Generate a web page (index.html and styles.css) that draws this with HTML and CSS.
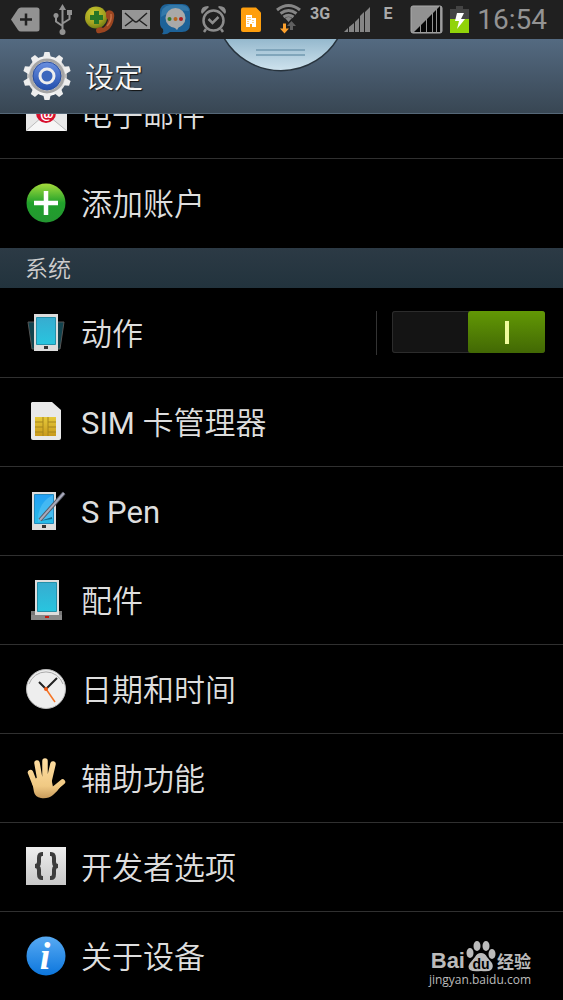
FILE: index.html
```html
<!DOCTYPE html>
<html lang="zh-CN">
<head>
    <meta charset="UTF-8">
    <meta name="viewport" content="width=device-width, initial-scale=1.0">
    <title>设定</title>
    <link rel="stylesheet" href="styles.css">
</head>

<body>
    <!-- 状态栏 -->
    <div class="status-bar">
        <svg class="status-icon" viewBox="6 0 38 39">
            <path d="M11 19.5L18 9q1-1.500 3-1.500H37q2.500 0 2.500 2.500V29q0 2.500-2.500 2.500H21q-2 0-3-1.500z" fill="#929292"/>
            <path d="M26 13.500v12M20 19.500h12" stroke="#222" stroke-width="2.500"/>
        </svg>
        <svg class="status-icon" viewBox="44 0 38 39">
            <path d="M62.500 7v25M62.500 26l-6.500-4.500V15M62.500 23.500l7-4.500v-6" fill="none" stroke="#929292" stroke-width="2"/>
            <path d="M62.500 4l3.500 6h-7z" fill="#929292"/>
            <circle cx="62.500" cy="32" r="3" fill="#929292"/>
            <circle cx="56" cy="15.500" r="2.500" fill="#929292"/>
            <path d="M67 10h5v5h-5z" fill="#929292"/>
        </svg>
        <svg class="status-icon" viewBox="82 0 38 39">
            <defs>
                <radialGradient id="ball" cx=".4" cy=".3" r=".8">
                    <stop offset="0" stop-color="#c9cb30"/>
                    <stop offset=".6" stop-color="#a3a020"/>
                    <stop offset="1" stop-color="#5d7210"/>
                </radialGradient>
            </defs>
            <circle cx="96" cy="17.500" r="11" fill="url(#ball)"/>
            <path d="M94 11h5v4h4v5h-4v4h-5v-4h-4v-5h4z" fill="#267526"/>
            <path d="M106 12q2-3 6-1 3 2 2 7-1 8-6 12-5 4-11 3-2-3 0-5l4-1 2 1q4-3 5-8l-2-3z" fill="#9b4520"/>
            <path d="M111 14q1 7-4 12" fill="none" stroke="#c67045" stroke-width="1.500"/>
        </svg>
        <svg class="status-icon" viewBox="120 0 38 39">
            <path d="M122 10h28v19h-28z" fill="#969696"/>
            <path d="M125 13l9 8q2 2 4 0l9-8M125 26l8-6M147 26l-8-6" fill="none" stroke="#222" stroke-width="1.500"/>
        </svg>
        <svg class="status-icon" viewBox="158 0 38 39">
            <path d="M168 4h14q8 0 8 8v12q0 8-8 8h-12q-3 3-8 2 2-2 1-5-3-2-3-6V12q0-8 8-8z" fill="#1d6298"/>
            <path d="M161 17q0-11 9-12h12q7 1 7 6-15-2-28 6z" fill="#3479aa"/>
            <circle cx="175.500" cy="18" r="10" fill="#a9a9a9"/>
            <path d="M172 25l5 5 3-5z" fill="#a9a9a9"/>
            <circle cx="169.500" cy="19" r="2" fill="#357b2c"/>
            <circle cx="175.500" cy="19" r="2" fill="#b5651f"/>
            <circle cx="181" cy="19" r="2" fill="#ae1d1d"/>
        </svg>
        <svg class="status-icon" viewBox="196 0 38 39">
            <circle cx="213.500" cy="20.500" r="10" fill="none" stroke="#8c8c8c" stroke-width="2.500"/>
            <path d="M208.500 19l4 4 6-6M206 29l-2 3M221 29l2 3" fill="none" stroke="#8c8c8c" stroke-width="2.500"/>
            <path d="M201 12q0-6 7-6l1 1-7 7zM226 12q0-6-7-6l-1 1 7 7z" fill="#8c8c8c"/>
        </svg>
        <svg class="status-icon" viewBox="234 0 38 39">
            <path d="M243 7.500h13l5 5V30q0 2-2 2h-16q-2 0-2-2V9.500q0-2 2-2z" fill="#fe9e0d"/>
            <path d="M246 15h6v3h4v9h-10z" fill="#fff"/>
            <path d="M248 17v7M250 17v4M253 20v4" stroke="#fe9e0d" stroke-dasharray="1 1"/>
            <path d="M250 24h2v3h-2z" fill="#fe9e0d"/>
        </svg>
        <svg class="status-icon" viewBox="272 0 38 39">
            <path d="M277 10q11.500-9 23 0M280.500 13.500q8-6 16 0M283.500 17q5-3.500 10 0" fill="none" stroke="#858585" stroke-width="3"/>
            <path d="M285 18q3.500-2 7 0l-3.500 4z" fill="#858585"/>
            <path d="M283 23.500h3v5h3l-4.500 5-4.500-5h3z" fill="#fda12d"/>
            <path d="M290 30h3v-4h3l-4.500-5-4.500 5h3z" fill="#606060"/>
        </svg>
        <span class="network">3G</span>
        <svg class="status-icon small" viewBox="342 0 32 39">
            <path d="M344 32l4-4v4zM349 32v-5l5-4v9zM355 32V22l4-4v14zM360 32V16l4-4v20zM365 32V12l5-5v25z" fill="#858585"/>
        </svg>
        <span class="network center">E</span>
        <svg class="status-icon" viewBox="406 0 38 39">
            <rect x="411" y="6" width="31" height="27" rx="2" fill="#929292" stroke="#aaa"/>
            <path d="M414 32l6-6v6zM421 32v-7l5-5v12zM427 32V19l5-5v18zM433 32V13l3-3v22zM437 32V9l3-3v26z" fill="#050505"/>
        </svg>
        <svg class="status-icon small" viewBox="444 0 32 39">
            <path d="M450 9h6V6h7v3h6v10h-19z" fill="#444"/>
            <path d="M450 19h19v14h-19z" fill="#91d30a"/>
            <path d="M457 13h7l-3 6h4l-8 10 2-8h-4z" fill="#fff"/>
        </svg>
        <time class="clock">16:54</time>
    </div>

    <!-- 标题 -->
    <header class="header">
        <svg class="header-icon" viewBox="0 0 48 48">
            <defs>
                <linearGradient id="gear" x1="0" y1="0" x2="0" y2="1">
                    <stop offset="0" stop-color="#fafafa"/>
                    <stop offset=".5" stop-color="#bcbcbc"/>
                    <stop offset="1" stop-color="#fff"/>
                </linearGradient>
                <linearGradient id="gearBlue" x1="0" y1="0" x2="0" y2="1">
                    <stop offset="0" stop-color="#6a8fdf"/>
                    <stop offset="1" stop-color="#234fae"/>
                </linearGradient>
            </defs>
            <circle cx="24" cy="24" r="20" fill="url(#gear)"/>
            <g fill="#eee">
                <path id="tooth" d="M20 6l1.500-6h5L28 6z"/>
                <use href="#tooth" transform="rotate(36 24 24)"/>
                <use href="#tooth" transform="rotate(72 24 24)"/>
                <use href="#tooth" transform="rotate(108 24 24)"/>
                <use href="#tooth" transform="rotate(144 24 24)"/>
                <use href="#tooth" transform="rotate(180 24 24)"/>
                <use href="#tooth" transform="rotate(216 24 24)"/>
                <use href="#tooth" transform="rotate(252 24 24)"/>
                <use href="#tooth" transform="rotate(288 24 24)"/>
                <use href="#tooth" transform="rotate(324 24 24)"/>
            </g>
            <circle cx="24" cy="24" r="16" fill="none" stroke="#a5a5a5" stroke-width="3"/>
            <circle cx="24" cy="24" r="14" fill="url(#gearBlue)" stroke="#2b4f9e"/>
            <circle cx="24" cy="24" r="7" fill="#3c67bd" stroke="#eee" stroke-width="3"/>
        </svg>
        <h1>设定</h1>
        <svg class="handle" viewBox="0 0 116 34">
            <defs>
                <linearGradient id="tab" x1="0" y1="0" x2="0" y2="1">
                    <stop offset="0" stop-color="#93b7cc"/>
                    <stop offset="1" stop-color="#cfe3ee"/>
                </linearGradient>
            </defs>
            <path d="M0 -1A66 66 0 0 0 114 -1z" fill="url(#tab)" stroke="#27333d" stroke-width="1.500"/>
            <path d="M32 11h49M32 16h49" stroke="#7199b0" stroke-width="1.500"/>
        </svg>
    </header>

    <!-- 列表 -->
    <main class="list">
        <a class="row" href="#">
            <svg class="icon" viewBox="0 0 40 40">
                <path d="M0 6h41v31H0z" fill="#e8e8e8"/>
                <path d="M0 37l16-14h8l17 14" fill="#f6f6f6" stroke="#bbb"/>
                <circle cx="20" cy="19" r="10" fill="#d80f2c"/>
                <text x="21" y="24" text-anchor="middle" font-size="15" font-weight="700" font-family="Roboto" fill="#fff">@</text>
            </svg>
            <span>电子邮件</span>
        </a>
        <a class="row last" href="#">
            <svg class="icon" viewBox="0 0 40 40">
                <defs>
                    <linearGradient id="green" x1="0" y1="0" x2="0" y2="1">
                        <stop offset="0" stop-color="#a5dc3c"/>
                        <stop offset=".5" stop-color="#20a12b"/>
                        <stop offset="1" stop-color="#249631"/>
                    </linearGradient>
                </defs>
                <circle cx="20" cy="20" r="19.500" fill="url(#green)"/>
                <path d="M20 8v24M8 20h24" stroke="#fff" stroke-width="4.500"/>
            </svg>
            <span>添加账户</span>
        </a>

        <h2 class="section">系统</h2>

        <div class="row">
            <svg class="icon" viewBox="0 0 40 40">
                <defs>
                    <linearGradient id="screen" x1="0" y1="0" x2="0" y2="1">
                        <stop offset="0" stop-color="#37acd0"/>
                        <stop offset="1" stop-color="#28c5df"/>
                    </linearGradient>
                </defs>
                <path d="M2 9h8v27H6zM38 9h-8v27h4z" fill="#12434e" stroke="#555"/>
                <path d="M8 1h24v37H8z" fill="#ddd"/>
                <path d="M10.500 4.500h19v27h-19z" fill="url(#screen)" stroke="#2490a9"/>
                <path d="M18 33h4v3h-4z" fill="#333"/>
            </svg>
            <label for="motion">动作</label>
            <div class="switch-box">
                <input type="checkbox" class="switch" id="motion" checked>
            </div>
        </div>
        <a class="row" href="#">
            <svg class="icon" viewBox="0 0 40 40">
                <defs>
                    <linearGradient id="gold" x1="0" y1="0" x2="0" y2="1">
                        <stop offset="0" stop-color="#e6c93a"/>
                        <stop offset="1" stop-color="#c99a1c"/>
                    </linearGradient>
                </defs>
                <path d="M6 0h20l9 8v28q0 2-2 2H7q-2 0-2-2V1z" fill="#e9e9e9"/>
                <path d="M9 15h21v19H9z" fill="url(#gold)"/>
                <path d="M17 15v19M22 15v19M9 20h8M9 25h8M9 30h8M22 20h8M22 25h8M22 30h8" stroke="#a5841d"/>
            </svg>
            <span><span class="latin">SIM</span> 卡管理器</span>
        </a>
        <a class="row" href="#">
            <svg class="icon" viewBox="0 0 40 40">
                <defs>
                    <linearGradient id="screenBlue" x1="0" y1="0" x2="0" y2="1">
                        <stop offset="0" stop-color="#239ff5"/>
                        <stop offset="1" stop-color="#28bce6"/>
                    </linearGradient>
                </defs>
                <path d="M6 1h24v38H6z" fill="#ddd"/>
                <path d="M8.500 3.500h19v29h-19z" fill="url(#screenBlue)" stroke="#2388bb"/>
                <path d="M12 31Q11 12 27 4v23z" fill="#59c3f5" opacity=".6"/>
                <path d="M14 30l12-4v2z" fill="#126c91"/>
                <path d="M14 29L38 2" stroke="#555a66" stroke-width="4"/>
                <path d="M14 29L38 2" stroke="#aab" stroke-width="2"/>
                <path d="M16 34h4v3h-4z" fill="#333"/>
            </svg>
            <span class="latin">S Pen</span>
        </a>
        <a class="row" href="#">
            <svg class="icon" viewBox="0 0 40 40">
                <path d="M5 31h31v9H5z" fill="#777"/>
                <path d="M9 0h24v35H9z" fill="#ddd"/>
                <path d="M11.500 2.500h19v29h-19z" fill="url(#screen)" stroke="#2490a9"/>
                <path d="M5 35h31v5H5z" fill="#888"/>
                <path d="M19 36h4v2h-4z" fill="#c51b10"/>
            </svg>
            <span>配件</span>
        </a>
        <a class="row" href="#">
            <svg class="icon" viewBox="0 0 40 40">
                <circle cx="20" cy="20" r="19.500" fill="#eee" stroke="#bbb"/>
                <path d="M3 15a18 18 0 0 1 34 0" fill="none" stroke="#aaa"/>
                <path d="M20 20l-7-7M20 20L31 9" stroke="#222" stroke-width="2"/>
                <path d="M20 20l9 13" stroke="#f57425" stroke-width="1.500"/>
                <circle cx="20" cy="20" r="2" fill="#ef5a17"/>
            </svg>
            <span>日期和时间</span>
        </a>
        <a class="row" href="#">
            <svg class="icon" viewBox="0 0 40 40">
                <defs>
                    <linearGradient id="skin" gradientUnits="userSpaceOnUse" x1="0" y1="0" x2="0" y2="40">
                        <stop offset="0" stop-color="#ffdfa3"/>
                        <stop offset=".7" stop-color="#f0c983"/>
                        <stop offset="1" stop-color="#c99c5c"/>
                    </linearGradient>
                </defs>
                <path d="M4.500 14.500L9 26M11 5l3 17M19 3v18M27 6l-4 17M36.500 24L28 31" fill="none" stroke="url(#skin)" stroke-width="5.500" stroke-linecap="round"/>
                <path d="M6 23l6-4h13l2 10 6-3 2 2q-4 6-8 9-5 4-12 3-6-1-7-6z" fill="url(#skin)"/>
            </svg>
            <span>辅助功能</span>
        </a>
        <a class="row" href="#">
            <svg class="icon" viewBox="0 0 40 40">
                <defs>
                    <linearGradient id="grey" x1="0" y1="0" x2="0" y2="1">
                        <stop offset="0" stop-color="#eee"/>
                        <stop offset="1" stop-color="#c8c8c8"/>
                    </linearGradient>
                </defs>
                <path d="M0 0h40v38H0z" fill="url(#grey)"/>
                <g fill="none" stroke="#3c3c3c" stroke-width="4">
                    <path d="M17 7h-1q-3 0-3 4v4q0 4-4 4 4 0 4 4v4q0 4 3 4h1"/>
                    <path d="M24 7h1q3 0 3 4v4q0 4 4 4-4 0-4 4v4q0 4-3 4h-1"/>
                </g>
            </svg>
            <span>开发者选项</span>
        </a>
        <a class="row last" href="#">
            <svg class="icon" viewBox="0 0 40 40">
                <defs>
                    <linearGradient id="blue" x1="0" y1="0" x2="0" y2="1">
                        <stop offset="0" stop-color="#57aaf3"/>
                        <stop offset="1" stop-color="#0c76dd"/>
                    </linearGradient>
                </defs>
                <circle cx="20" cy="20" r="19.500" fill="url(#blue)"/>
                <text x="19" y="33" text-anchor="middle" font-size="38" font-style="italic" font-weight="700" font-family="Liberation Serif" fill="#fff">i</text>
            </svg>
            <span>关于设备</span>
        </a>
    </main>

    <!-- 水印 -->
    <div class="watermark">
        <div class="brand">
            <span class="bai">Bai</span>
            <svg class="paw" viewBox="0 0 30 32">
                <ellipse cx="4" cy="13" rx="3.500" ry="5"/>
                <ellipse cx="11" cy="6" rx="3.500" ry="5"/>
                <ellipse cx="20" cy="6" rx="3.500" ry="5"/>
                <ellipse cx="26" cy="14" rx="3.500" ry="5"/>
                <path d="M15 13q4 0 6 4l5 6q2 4-1 7-2 2-10 1-8 1-11-1-3-3 0-7l5-6q2-4 6-4z"/>
                <text x="15" y="29" text-anchor="middle">du</text>
            </svg>
            <span class="jingyan">经验</span>
        </div>
        <div class="site">jingyan.baidu.com</div>
    </div>
</body>
</html>
```
FILE: styles.css
```css
*{
  box-sizing: border-box;
}
body{
  position: relative;
  margin: 0;
  background-color: #000;
  color: #dedede;
  font-family: Roboto, "Noto Sans CJK SC", sans-serif;
}
h1, h2{
  margin: 0;
  font-weight: 350;
}

/* 状态栏 */
.status-bar{
  position: relative;
  z-index: 1;
  display: flex;
  height: 39px;
  padding: 0 16px 0 6px;
  background-color: #202020;
}
.status-icon{
  flex: none;
  width: 38px;
  height: 39px;
}
.small{
  width: 32px;
}
.network{
  width: 32px;
  padding-top: 5px;
  color: #aaa;
  font-size: 16px;
  font-weight: 700;
  line-height: 18px;
}
.center{
  padding-right: 4px;
  text-align: center;
}
.clock{
  margin-left: auto;
  color: #939393;
  font-size: 28px;
  line-height: 39px;
}

/* 标题 */
.header{
  position: relative;
  z-index: 1;
  display: flex;
  align-items: center;
  gap: 14px;
  height: 75px;
  padding-left: 23px;
  background: linear-gradient(#546a81, #384653);
  border-bottom: 1px solid #566878;
}
.header-icon{
  width: 48px;
  height: 48px;
}
.header h1{
  padding-top: 4px;
  color: #f5f5f5;
  font-size: 29px;
  line-height: 40px;
  text-shadow: 1px 1px 1px #111;
}
.handle{
  position: absolute;
  top: 0;
  left: 50%;
  width: 116px;
  height: 34px;
  margin-left: -58px;
}

/* 列表向上滚动了一段,第一行被标题盖住 */
.list{
  margin-top: -44px;
}
.row{
  display: flex;
  align-items: center;
  gap: 15px;
  height: 89px;
  padding: 0 18px 0 26px;
  border-bottom: 1px solid #303030;
  color: #dedede;
  font-size: 31px;
  font-weight: 350;
  line-height: 44px;
  text-decoration: none;
}
.row > span, .row label{
  padding-top: 4px;
}
.row .latin{
  font-weight: 400;
}
.last{
  height: 88px;
  border-bottom: none;
}
.icon{
  flex: none;
  width: 40px;
  height: 40px;
  overflow: visible;
}
.section{
  height: 42px;
  padding: 2px 0 0 25px;
  background: linear-gradient(#2c3a45, #22333d);
  border-top: 1px solid #000;
  border-bottom: 1px solid #000;
  color: #ccc;
  font-size: 23px;
  line-height: 40px;
}

/* 开关 */
.switch-box{
  margin-left: auto;
  padding-left: 15px;
  border-left: 1px solid #333;
}
.switch{
  display: flex;
  justify-content: flex-end;
  appearance: none;
  width: 153px;
  height: 42px;
  margin: 0 0 2px;
  background-color: #141414;
  border-radius: 3px;
  box-shadow: inset 0 0 0 1px #2c2c2c;
  cursor: pointer;
}
.switch::before{
  content: "";
  width: 77px;
  height: 42px;
  border-radius: 3px;
  background: linear-gradient(#f0fb9c, #f0fb9c) center / 4px 23px no-repeat, linear-gradient(#629805, #426804);
}

/* 水印 */
.watermark{
  position: absolute;
  right: 32px;
  bottom: 12px;
  color: #bbb;
}
.brand{
  display: flex;
  align-items: flex-end;
  justify-content: flex-end;
  gap: 1px;
  height: 32px;
}
.bai{
  font-family: "Liberation Sans", sans-serif;
  font-size: 22px;
  font-weight: 700;
  line-height: 22px;
}
.paw{
  width: 30px;
  height: 32px;
  fill: #bbb;
}
.paw text{
  fill: #000;
  font-family: "Liberation Sans", sans-serif;
  font-size: 14px;
  font-weight: 700;
}
.jingyan{
  font-size: 17px;
  font-weight: 700;
  line-height: 20px;
}
.site{
  font-family: "Open Sans", sans-serif;
  font-size: 12px;
  line-height: 16px;
}
```
